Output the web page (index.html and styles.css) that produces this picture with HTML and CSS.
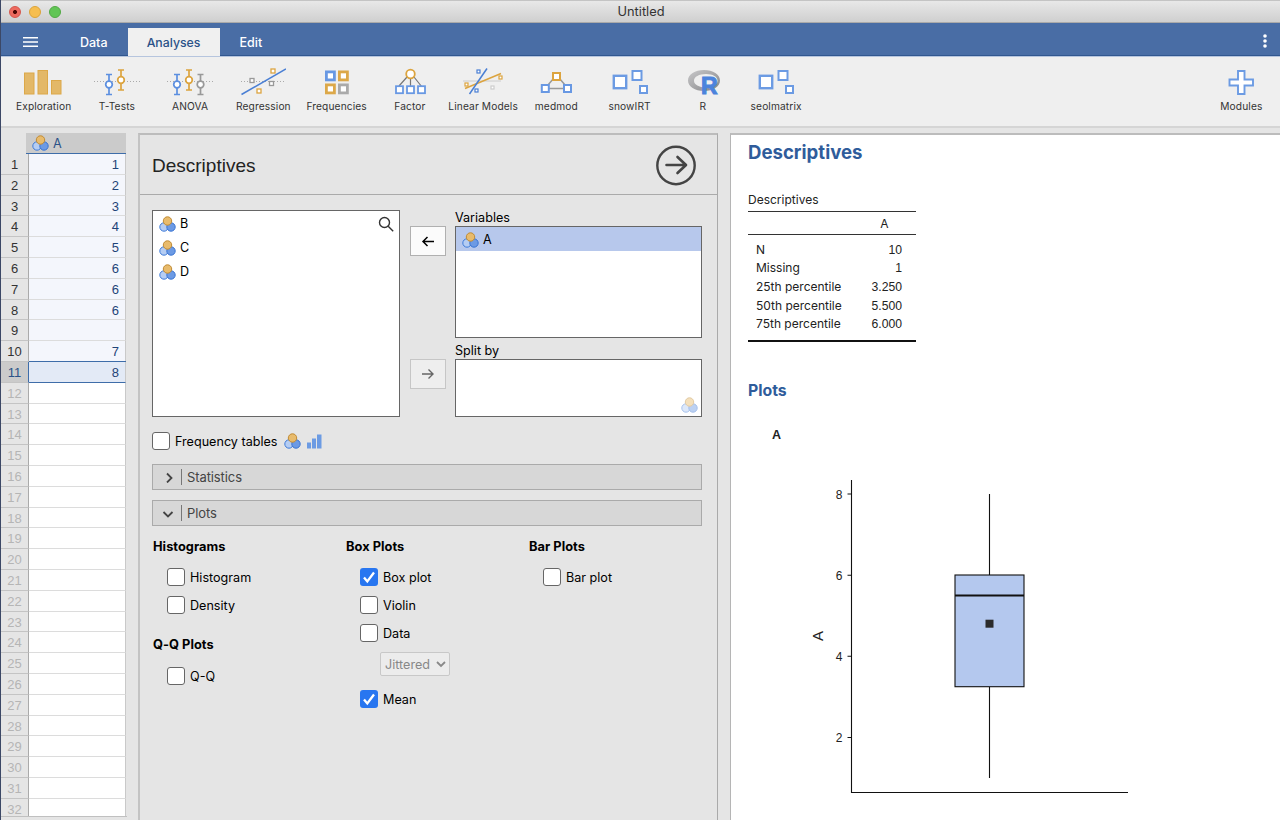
FILE: index.html
```html
<!DOCTYPE html>
<html lang="en">
<head>
    <meta charset="UTF-8">
    <meta name="viewport" content="width=device-width, initial-scale=1.0">
    <title>Untitled</title>
    <link rel="stylesheet" href="styles.css">
</head>
<body>
    <!-- shared icons -->
    <svg class="defs" width="0" height="0">
        <symbol id="nominal" viewBox="0 0 17 16">
            <circle cx="5" cy="11" r="4.2" fill="#b5cdf3" stroke="#3f7bd8"/>
            <circle cx="12" cy="11" r="4.2" fill="#6c9ae4" stroke="#3a74d2"/>
            <circle cx="8.5" cy="5" r="4.2" fill="#e8bb6c" stroke="#c08b35"/>
        </symbol>
        <symbol id="squares" viewBox="0 0 46 30">
            <g fill="#fff" stroke="#6c9be3">
                <rect x="6.8" y="8.8" width="12.4" height="12.4" stroke-width="2.4"/>
                <rect x="25.5" y="4" width="9" height="9" stroke-width="2"/>
                <rect x="33" y="19" width="7" height="7" stroke-width="2"/>
            </g>
        </symbol>
    </svg>

    <div class="window">
        <div class="titlebar">
            <div class="lights">
                <span class="light red"></span>
                <span class="light yellow"></span>
                <span class="light green"></span>
            </div>
            <div class="window-title">Untitled</div>
        </div>

        <div class="tabs">
            <button class="menu-btn"><svg width="16" height="12"><path d="M0 1.7h15M0 6h15M0 10.3h15" stroke="#fff" stroke-width="1.6"/></svg></button>
            <div class="tab">Data</div>
            <div class="tab active">Analyses</div>
            <div class="tab">Edit</div>
            <button class="more-btn"><svg width="4" height="14" fill="#fff"><circle cx="2" cy="2" r="1.8"/><circle cx="2" cy="7" r="1.8"/><circle cx="2" cy="12" r="1.8"/></svg></button>
        </div>

        <div class="toolbar">
            <div class="tool">
                <svg width="46" height="30" fill="#e3b868" stroke="#dca849"><rect x="3.5" y="6" width="9.5" height="21"/><rect x="17" y="3.5" width="9.5" height="23.5"/><rect x="30.5" y="13.5" width="9.5" height="13.5"/></svg>
                <span>Exploration</span>
            </div>
            <div class="tool">
                <svg width="46" height="30" fill="none" stroke-width="1.7">
                    <path d="M0 14.5h46" stroke="#aaa" stroke-width="1" stroke-dasharray="1 2"/>
                    <g stroke="#5c8fe0"><path d="M12 7.5h6M12 27.5h6M15 7.5v20"/><circle cx="15" cy="17.5" r="3.3" fill="#fff"/></g>
                    <g stroke="#dca43f"><path d="M24 3h6M24 23h6M27 3v20"/><circle cx="27" cy="13" r="3.3" fill="#fff"/></g>
                </svg>
                <span>T-Tests</span>
            </div>
            <div class="tool">
                <svg width="46" height="30" fill="none" stroke-width="1.7">
                    <path d="M0 14.5h46" stroke="#aaa" stroke-width="1" stroke-dasharray="1 2"/>
                    <g stroke="#5c8fe0"><path d="M7 7.5h6M7 27.5h6M10 7.5v20"/><circle cx="10" cy="17.5" r="3.3" fill="#fff"/></g>
                    <g stroke="#dca43f"><path d="M19 3h6M19 23h6M22 3v20"/><circle cx="22" cy="13" r="3.3" fill="#fff"/></g>
                    <g stroke="#999"><path d="M30.5 7.5h6M30.5 27.5h6M33.5 7.5v20"/><circle cx="33.5" cy="17.5" r="3.3" fill="#fff"/></g>
                </svg>
                <span>ANOVA</span>
            </div>
            <div class="tool">
                <svg width="46" height="30" fill="#fff">
                    <path d="M1 14.5h46" stroke="#aaa" stroke-dasharray="1 2"/>
                    <path d="M1.5 27.5L46 2" stroke="#4a7fd4" stroke-width="1.5"/>
                    <g stroke-width="1.3"><rect x="31" y="2" width="4" height="4" stroke="#dca43f"/><rect x="17" y="22" width="4" height="4" stroke="#dca43f"/><rect x="10" y="11.5" width="4" height="4" stroke="#999"/><rect x="29.5" y="14.5" width="4" height="4" stroke="#999"/></g>
                </svg>
                <span>Regression</span>
            </div>
            <div class="tool">
                <svg width="46" height="30" fill="#fff" stroke-width="2.8"><rect x="12.4" y="4.9" width="8" height="8" stroke="#6898e3"/><rect x="25.4" y="4.9" width="8" height="8" stroke="#dca849"/><rect x="12.4" y="17.9" width="8" height="8" stroke="#dca849"/><rect x="25.4" y="17.9" width="8" height="8" stroke="#aaa"/></svg>
                <span>Frequencies</span>
            </div>
            <div class="tool">
                <svg width="46" height="30" fill="#fff" stroke="#6898e3" stroke-width="1.8"><path d="M20 10L12 19M27 10l8 10M23.5 10v9" stroke="#777" stroke-width="1.2"/><circle cx="23.5" cy="7" r="4.3" stroke="#dca43f"/><rect x="9" y="19.2" width="7" height="7"/><rect x="20" y="19.2" width="7" height="7"/><rect x="31" y="19.2" width="7" height="7"/></svg>
                <span>Factor</span>
            </div>
            <div class="tool">
                <svg width="46" height="30" fill="#fff">
                    <path d="M3 14h38" stroke="#ccc"/><path d="M5 21.5L41 6.5" stroke="#dca43f" stroke-width="1.5"/><path d="M9.5 27L27 1.5" stroke="#4a7fd4" stroke-width="1.5"/>
                    <g stroke-width="1.2"><rect x="17" y="3" width="3" height="3" stroke="#4a7fd4"/><rect x="15" y="22" width="3" height="3" stroke="#4a7fd4"/><rect x="5" y="16" width="3" height="3" stroke="#dca43f"/><rect x="39" y="9" width="3" height="3" stroke="#dca43f"/><rect x="31" y="19" width="3" height="3" stroke="#ccc"/></g>
                </svg>
                <span>Linear Models</span>
            </div>
            <div class="tool">
                <svg width="46" height="30" fill="#fff" stroke="#6898e3" stroke-width="2"><path d="M23.5 8L12 21.5h23z" fill="none" stroke="#999" stroke-width="1.5"/><rect x="20" y="6" width="7" height="7" stroke="#dca43f"/><rect x="8.8" y="18" width="7" height="7"/><rect x="31" y="18" width="7" height="7"/></svg>
                <span>medmod</span>
            </div>
            <div class="tool"><svg width="46" height="30"><use href="#squares"/></svg><span>snowIRT</span></div>
            <div class="tool">
                <svg class="r-icon" width="46" height="30">
                    <defs><linearGradient id="ring" x2="1" y2="1"><stop offset="0" stop-color="#c8c8ca"/><stop offset="1" stop-color="#858587"/></linearGradient></defs>
                    <path fill="url(#ring)" fill-rule="evenodd" d="M24 3c9 0 16 4.5 16 10.5S33 24 24 24 8 19.5 8 13.5 15 3 24 3zM26 7c-7 0-12 2.8-12 6.7s5 6.7 12 6.7 11.5-2.8 11.5-6.7S33 7 26 7z"/>
                    <text class="r-logo" x="21" y="27">R</text>
                </svg>
                <span>R</span>
            </div>
            <div class="tool"><svg width="46" height="30"><use href="#squares"/></svg><span>seolmatrix</span></div>
            <div class="tool modules">
                <svg width="46" height="30"><path d="M20 4h6.500v8.500H35v6h-8.500V27H20v-8.500h-8.500v-6H20z" fill="#fff" stroke="#6c9be3" stroke-width="1.9"/></svg>
                <span>Modules</span>
            </div>
        </div>

        <div class="main">
            <div class="sheet">
                <div class="col-head"><svg width="17" height="16"><use href="#nominal"/></svg>A</div>
                <div class="rows" id="rows"></div>
            </div>

            <div class="options">
                <div class="options-head">
                    <h1>Descriptives</h1>
                    <svg width="42" height="42" fill="none" stroke="#444" stroke-linecap="round" stroke-linejoin="round"><circle cx="21" cy="21.5" r="18.7" stroke-width="2.4"/><path d="M11.5 21h19M22.5 13l8.5 8-8.5 8" stroke-width="2.6"/></svg>
                </div>

                <div class="supplier">
                    <div class="listbox source">
                        <div class="item"><svg width="17" height="16"><use href="#nominal"/></svg>B</div>
                        <div class="item"><svg width="17" height="16"><use href="#nominal"/></svg>C</div>
                        <div class="item"><svg width="17" height="16"><use href="#nominal"/></svg>D</div>
                        <svg class="search" width="16" height="16" fill="none" stroke="#333" stroke-width="1.4"><circle cx="6.5" cy="6.5" r="5"/><path d="M10.2 10.2l5 5"/></svg>
                    </div>
                    <div class="arrows">
                        <button class="arrow-btn"><svg width="14" height="12" fill="none" stroke="#000" stroke-width="1.5"><path d="M13 6.500H2M6.500 2L2 6.500 6.500 11"/></svg></button>
                        <button class="arrow-btn disabled"><svg width="14" height="12" fill="none" stroke="#666" stroke-width="1.4"><path d="M1 6h11M7.5 1.5L12 6l-4.5 4.5"/></svg></button>
                    </div>
                    <div class="targets">
                        <label>Variables</label>
                        <div class="listbox variables">
                            <div class="item selected"><svg width="17" height="16"><use href="#nominal"/></svg>A</div>
                        </div>
                        <label>Split by</label>
                        <div class="listbox split">
                            <svg width="17" height="16"><use href="#nominal"/></svg>
                        </div>
                    </div>
                </div>

                <div class="check freq">
                    <span class="box"></span>Frequency tables
                    <svg class="freq-icon" width="17" height="16"><use href="#nominal"/></svg>
                    <svg width="15" height="15" fill="#6c9be3"><rect y="8.5" width="4" height="6"/><rect x="5" y="4.5" width="4" height="10"/><rect x="10" y="0.5" width="4.5" height="14"/></svg>
                </div>

                <div class="section"><svg width="14" height="12" fill="none" stroke="#444" stroke-width="1.8"><path d="M5 2.500l4.500 4.500L5 11.500"/></svg><span>Statistics</span></div>
                <div class="section open"><svg width="14" height="12" fill="none" stroke="#444" stroke-width="1.8"><path d="M1.500 5L6 9.500 10.500 5"/></svg><span>Plots</span></div>

                <div class="plot-options">
                    <div class="group histograms">
                        <h2>Histograms</h2>
                        <div class="check"><span class="box"></span>Histogram</div>
                        <div class="check"><span class="box"></span>Density</div>
                        <h2 class="qq">Q-Q Plots</h2>
                        <div class="check"><span class="box"></span>Q-Q</div>
                    </div>
                    <div class="group boxplots">
                        <h2>Box Plots</h2>
                        <div class="check"><span class="box on"><svg width="18" height="18"><path d="M4 9.5l3.3 4L14 4.5"/></svg></span>Box plot</div>
                        <div class="check"><span class="box"></span>Violin</div>
                        <div class="check"><span class="box"></span>Data</div>
                        <div class="select">Jittered<svg width="10" height="8" fill="none" stroke="#888" stroke-width="1.800"><path d="M1 2l4 4 4-4"/></svg></div>
                        <div class="check"><span class="box on"><svg width="18" height="18"><path d="M4 9.5l3.3 4L14 4.5"/></svg></span>Mean</div>
                    </div>
                    <div class="group">
                        <h2>Bar Plots</h2>
                        <div class="check"><span class="box"></span>Bar plot</div>
                    </div>
                </div>
            </div>

            <div class="results">
                <h1>Descriptives</h1>
                <table>
                    <caption>Descriptives</caption>
                    <thead>
                        <tr><th></th><th>A</th></tr>
                    </thead>
                    <tbody>
                        <tr><td>N</td><td>10</td></tr>
                        <tr><td>Missing</td><td>1</td></tr>
                        <tr><td>25th percentile</td><td>3.250</td></tr>
                        <tr><td>50th percentile</td><td>5.500</td></tr>
                        <tr><td>75th percentile</td><td>6.000</td></tr>
                    </tbody>
                </table>
                <h2>Plots</h2>
                <h3>A</h3>
                <svg class="plot" width="380" height="350">
                    <g stroke="#111" stroke-width="1.1" fill="none">
                        <path d="M71.5 10V322.5H348"/>
                        <path d="M67.5 24h4M67.5 105.2h4M67.5 186.3h4M67.5 267.5h4"/>
                        <path d="M209.5 24v81M209.5 217v91"/>
                        <rect x="175" y="105" width="69" height="111.7" fill="#b4c8ee"/>
                        <path d="M175 125.5h69" stroke-width="2"/>
                    </g>
                    <rect x="205.5" y="149.7" width="8" height="8" fill="#2b2b2b"/>
                    <g class="ticks">
                        <text x="62.5" y="28.5">8</text>
                        <text x="62.5" y="109.5">6</text>
                        <text x="62.5" y="190.7">4</text>
                        <text x="62.5" y="272">2</text>
                    </g>
                    <text class="axis-title" transform="translate(43 166) rotate(-90)">A</text>
                </svg>
            </div>
        </div>
    </div>

    <script>
        const values = [1, 2, 3, 4, 5, 6, 6, 6, '', 7, 8];
        const rows = document.getElementById('rows');

        // 32 rows fit in the visible part of the sheet
        for (let i = 1; i <= 32; i++) {
            const row = document.createElement('div');
            row.className = 'row';
            if (i > values.length) row.classList.add('empty');
            if (i === 11) row.classList.add('current');

            const num = document.createElement('span');
            num.className = 'num';
            num.textContent = i;

            const cell = document.createElement('span');
            cell.className = 'cell';
            cell.textContent = i <= values.length ? values[i - 1] : '';

            row.append(num, cell);
            rows.appendChild(row);
        }
    </script>
</body>
</html>
```

FILE: styles.css
```css
* {
    box-sizing: border-box;
}

body {
    margin: 0;
    height: 820px;
    overflow: hidden;
    background: #3c4866;
    font-family: Inter, "Liberation Sans", sans-serif;
    font-size: 12.6px;
    color: #000;
}

svg {
    display: block;
    flex: none;
}

.defs {
    position: absolute;
}

h1, h2, h3 {
    margin: 0;
}

button {
    padding: 0;
    border: none;
    background: none;
}

.window {
    height: 820px;
    margin-left: 1px;
    border-top: 1px solid #c4c4c4;
    display: flex;
    flex-direction: column;
    background: #e5e5e5;
}

/* Title bar */
.titlebar {
    height: 22px;
    flex: none;
    display: flex;
    align-items: center;
    background: linear-gradient(#e8e8e8, #cfcfcf);
    border-bottom: 1px solid #aaa;
}

.lights {
    display: flex;
    gap: 8px;
    padding-left: 7.5px;
    width: 80px;
}

.light {
    width: 12px;
    height: 12px;
    border-radius: 50%;
}

.red {
    background: radial-gradient(circle, #4c0805 1.7px, #ed6a5f 2.3px);
    border: 1px solid #d5544a;
}

.yellow {
    background: #f6be50;
    border: 1px solid #dca43a;
}

.green {
    background: #61c555;
    border: 1px solid #51a944;
}

.window-title {
    flex: 1;
    padding-right: 79px;
    text-align: center;
    color: #333;
    font-size: 12.8px;
}

/* Tabs */
.tabs {
    height: 33px;
    flex: none;
    display: flex;
    align-items: flex-end;
    background: #496da5;
    border-bottom: 1px solid #31578f;
    color: #fff;
}

.menu-btn {
    height: 27px;
    padding-left: 22px;
    width: 60px;
}

.tab {
    height: 28px;
    padding: 0 19px;
    line-height: 31px;
    font-weight: 500;
    font-size: 12.5px;
}

.tab.active {
    background: #f0f0f0;
    color: #2b5288;
    margin: 0 1px -1px;
    height: 28px;
    width: 92px;
    padding: 0;
    line-height: 29px;
    text-align: center;
    font-size: 12.3px;
}

.more-btn {
    margin-left: auto;
    height: 29px;
    padding-right: 13px;
}

/* Analyses toolbar */
.toolbar {
    height: 72px;
    flex: none;
    display: flex;
    padding: 10px 2px 0 6px;
    background: #efefef;
    border-top: 1px solid #b6c5de;
    border-bottom: 2px solid #d5d5d5;
}

.tool {
    width: 73.25px;
    flex: none;
    display: flex;
    flex-direction: column;
    align-items: center;
    gap: 3px;
    font-size: 10.2px;
    letter-spacing: 0.12px;
    line-height: 13px;
    color: #333;
    white-space: nowrap;
}

.tool.modules {
    margin-left: auto;
}

.r-icon {
    overflow: visible;
}

.r-logo {
    font-family: "Liberation Sans", sans-serif;
    font-weight: bold;
    font-size: 23px;
    fill: #4c83dc;
    stroke: #4c83dc;
}

/* Main area */
.main {
    flex: 1;
    min-height: 0;
    display: flex;
    padding-top: 5px;
}

.sheet {
    width: 126px;
    flex: none;
    height: 684px;
    overflow: hidden;
    border-bottom: 1px solid #c0c0c0;
}

.col-head {
    display: flex;
    align-items: center;
    gap: 4px;
    height: 21px;
    margin-left: 25px;
    width: 100px;
    padding-left: 6px;
    background: #cbcbcb;
    border-bottom: 1px solid #3e6da9;
    color: #2b5288;
}

.rows {
    font-family: "Liberation Sans", sans-serif;
    font-size: 13px;
}

.row {
    display: flex;
    height: 20.8px;
    width: 125px;
    color: #1f4478;
}

.num {
    width: 28px;
    border-right: 1px solid #aaa;
    border-bottom: 1px solid #c4c4c4;
    line-height: 21px;
    text-align: center;
    color: #333;
}

.cell {
    flex: 1;
    padding-right: 6px;
    line-height: 21px;
    text-align: right;
    background: #f4f6fc;
    border-right: 1px solid #c9c9c9;
    border-bottom: 1px solid #dcdcdc;
}

.empty .num {
    color: #b5b5b5;
}

.empty .cell {
    background: #fff;
}

.current .num {
    background: #cbcbcb;
    color: #2b5288;
    border-right-color: #3e6da9;
}

.current .cell {
    background: #e3eaf6;
    border-bottom-color: #3e6da9;
    box-shadow: 0 -1px #3e6da9, 0 1px #8ca9d0;
}

/* Options panel */
.options {
    width: 580px;
    flex: none;
    margin-left: 11px;
    border: 2px solid #bcbcbc;
    border-left-color: #c3c3c3;
    border-right: 1px solid #aaa;
    border-bottom: none;
    padding-right: 15px;
}

.options-head {
    height: 60px;
    margin-right: -15px;
    padding: 0 20px 0 12px;
    display: flex;
    justify-content: space-between;
    align-items: center;
    border-bottom: 1px solid #aaa;
}

.options-head h1 {
    padding-top: 2px;
    font: 19px "Liberation Sans", sans-serif;
    color: #222;
}

.supplier {
    display: flex;
    padding: 15px 0 0 12px;
}

.listbox {
    background: #fff;
    border: 1px solid #666;
}

.source {
    position: relative;
    width: 248px;
    height: 207px;
}

.search {
    position: absolute;
    top: 5px;
    right: 5px;
}

.item {
    height: 24px;
    display: flex;
    align-items: center;
    gap: 4px;
    padding: 1px 0 0 6px;
}

.selected {
    background: #b7c8ec;
}

.arrows {
    width: 55px;
    padding: 16px 0 0 10px;
    display: flex;
    flex-direction: column;
    gap: 103px;
}

.arrow-btn {
    width: 36px;
    height: 30px;
    display: flex;
    align-items: center;
    justify-content: center;
    background: #fbfbfb;
    border: 1px solid #b0b0b0;
}

.arrow-btn.disabled {
    background: #eee;
    border-color: #c6c6c6;
}

.targets {
    width: 247px;
}

.targets label {
    display: block;
    height: 16px;
    line-height: 15px;
}

.targets label + .variables {
    margin-bottom: 5px;
}

.variables {
    height: 112px;
}

.split {
    height: 58px;
    display: flex;
    justify-content: flex-end;
    align-items: flex-end;
    padding: 3px;
}

.split svg {
    opacity: 0.45;
}

.check {
    height: 18px;
    display: flex;
    align-items: center;
}

.box {
    width: 18px;
    height: 18px;
    margin-right: 5px;
    background: #fff;
    border: 1px solid #666;
    border-radius: 3px;
}

.box.on {
    background: #2876f0;
    border: none;
}

.box.on path {
    fill: none;
    stroke: #fff;
    stroke-width: 2.3;
}

.freq {
    margin: 15px 0 14px 12px;
}

.freq-icon {
    margin: 0 6px 0 7px;
}

.section {
    height: 26px;
    margin: 0 0 10px 12px;
    display: flex;
    align-items: center;
    padding-left: 9px;
    background: #d7d7d7;
    border: 1px solid #aaa;
    color: #444;
}

.section span {
    margin-left: 5px;
    padding-left: 5px;
    border-left: 1px solid #777;
    font-size: 13px;
    line-height: 16px;
    letter-spacing: -0.1px;
}

.plot-options {
    display: flex;
    padding: 3px 0 0 13px;
}

.group h2 {
    font-size: 12.8px;
    font-weight: 700;
    line-height: 16px;
    margin-bottom: 13px;
    letter-spacing: 0.05px;
}

.group .check {
    margin: 0 0 10px 14px;
}

.histograms {
    width: 193px;
}

.boxplots {
    width: 183px;
}

.group .qq {
    margin-top: 23px;
    margin-bottom: 14px;
}

.select {
    width: 70px;
    height: 24px;
    margin: 0 0 14px 34px;
    display: flex;
    align-items: center;
    justify-content: space-between;
    padding: 0 3px 0 4px;
    border: 1px solid #c8c8c8;
    border-radius: 2px;
    background: #ececec;
    color: #888;
}

/* Results */
.results {
    flex: 1;
    margin-left: 12px;
    padding: 6px 0 0 17px;
    background: #fff;
    border-top: 2px solid #bcbcbc;
    border-left: 1px solid #b5b5b5;
    color: #222;
}

.results h1 {
    font-size: 18.6px;
    line-height: 22px;
    color: #2f5c9b;
}

.results table {
    width: 168px;
    margin-top: 30px;
    border-collapse: collapse;
    border-bottom: 2px solid #111;
    font-size: 12px;
}

.results caption {
    text-align: left;
    line-height: 14px;
    padding-bottom: 4px;
}

.results thead tr {
    height: 23px;
    border-top: 1px solid #333;
    border-bottom: 1px solid #333;
}

.results th {
    font-weight: normal;
}

.results td, .results th {
    padding: 0 14px 0 8px;
}

.results th:last-child {
    padding: 0 20px 0 6px;
}

.results td {
    height: 18.8px;
    line-height: 18px;
}

.results td:last-child {
    text-align: right;
    padding-left: 0;
    font: 12.2px/18px "Liberation Sans", sans-serif;
}

.results tbody tr:first-child td {
    padding-top: 6px;
}

.results tbody tr:last-child td {
    padding-bottom: 7px;
}

.results h2 {
    margin-top: 39px;
    font-size: 15.8px;
    line-height: 20px;
    color: #2f5c9b;
}

.results h3 {
    margin: 26px 0 0 24px;
    font: bold 12.5px/16px "Liberation Sans", sans-serif;
}

.plot {
    margin: 27px 0 0 32px;
}

.plot text {
    font-family: "Liberation Sans", sans-serif;
    fill: #222;
}

.ticks {
    font-size: 12px;
    text-anchor: end;
}

.axis-title {
    font-size: 15px;
    text-anchor: middle;
}
```
